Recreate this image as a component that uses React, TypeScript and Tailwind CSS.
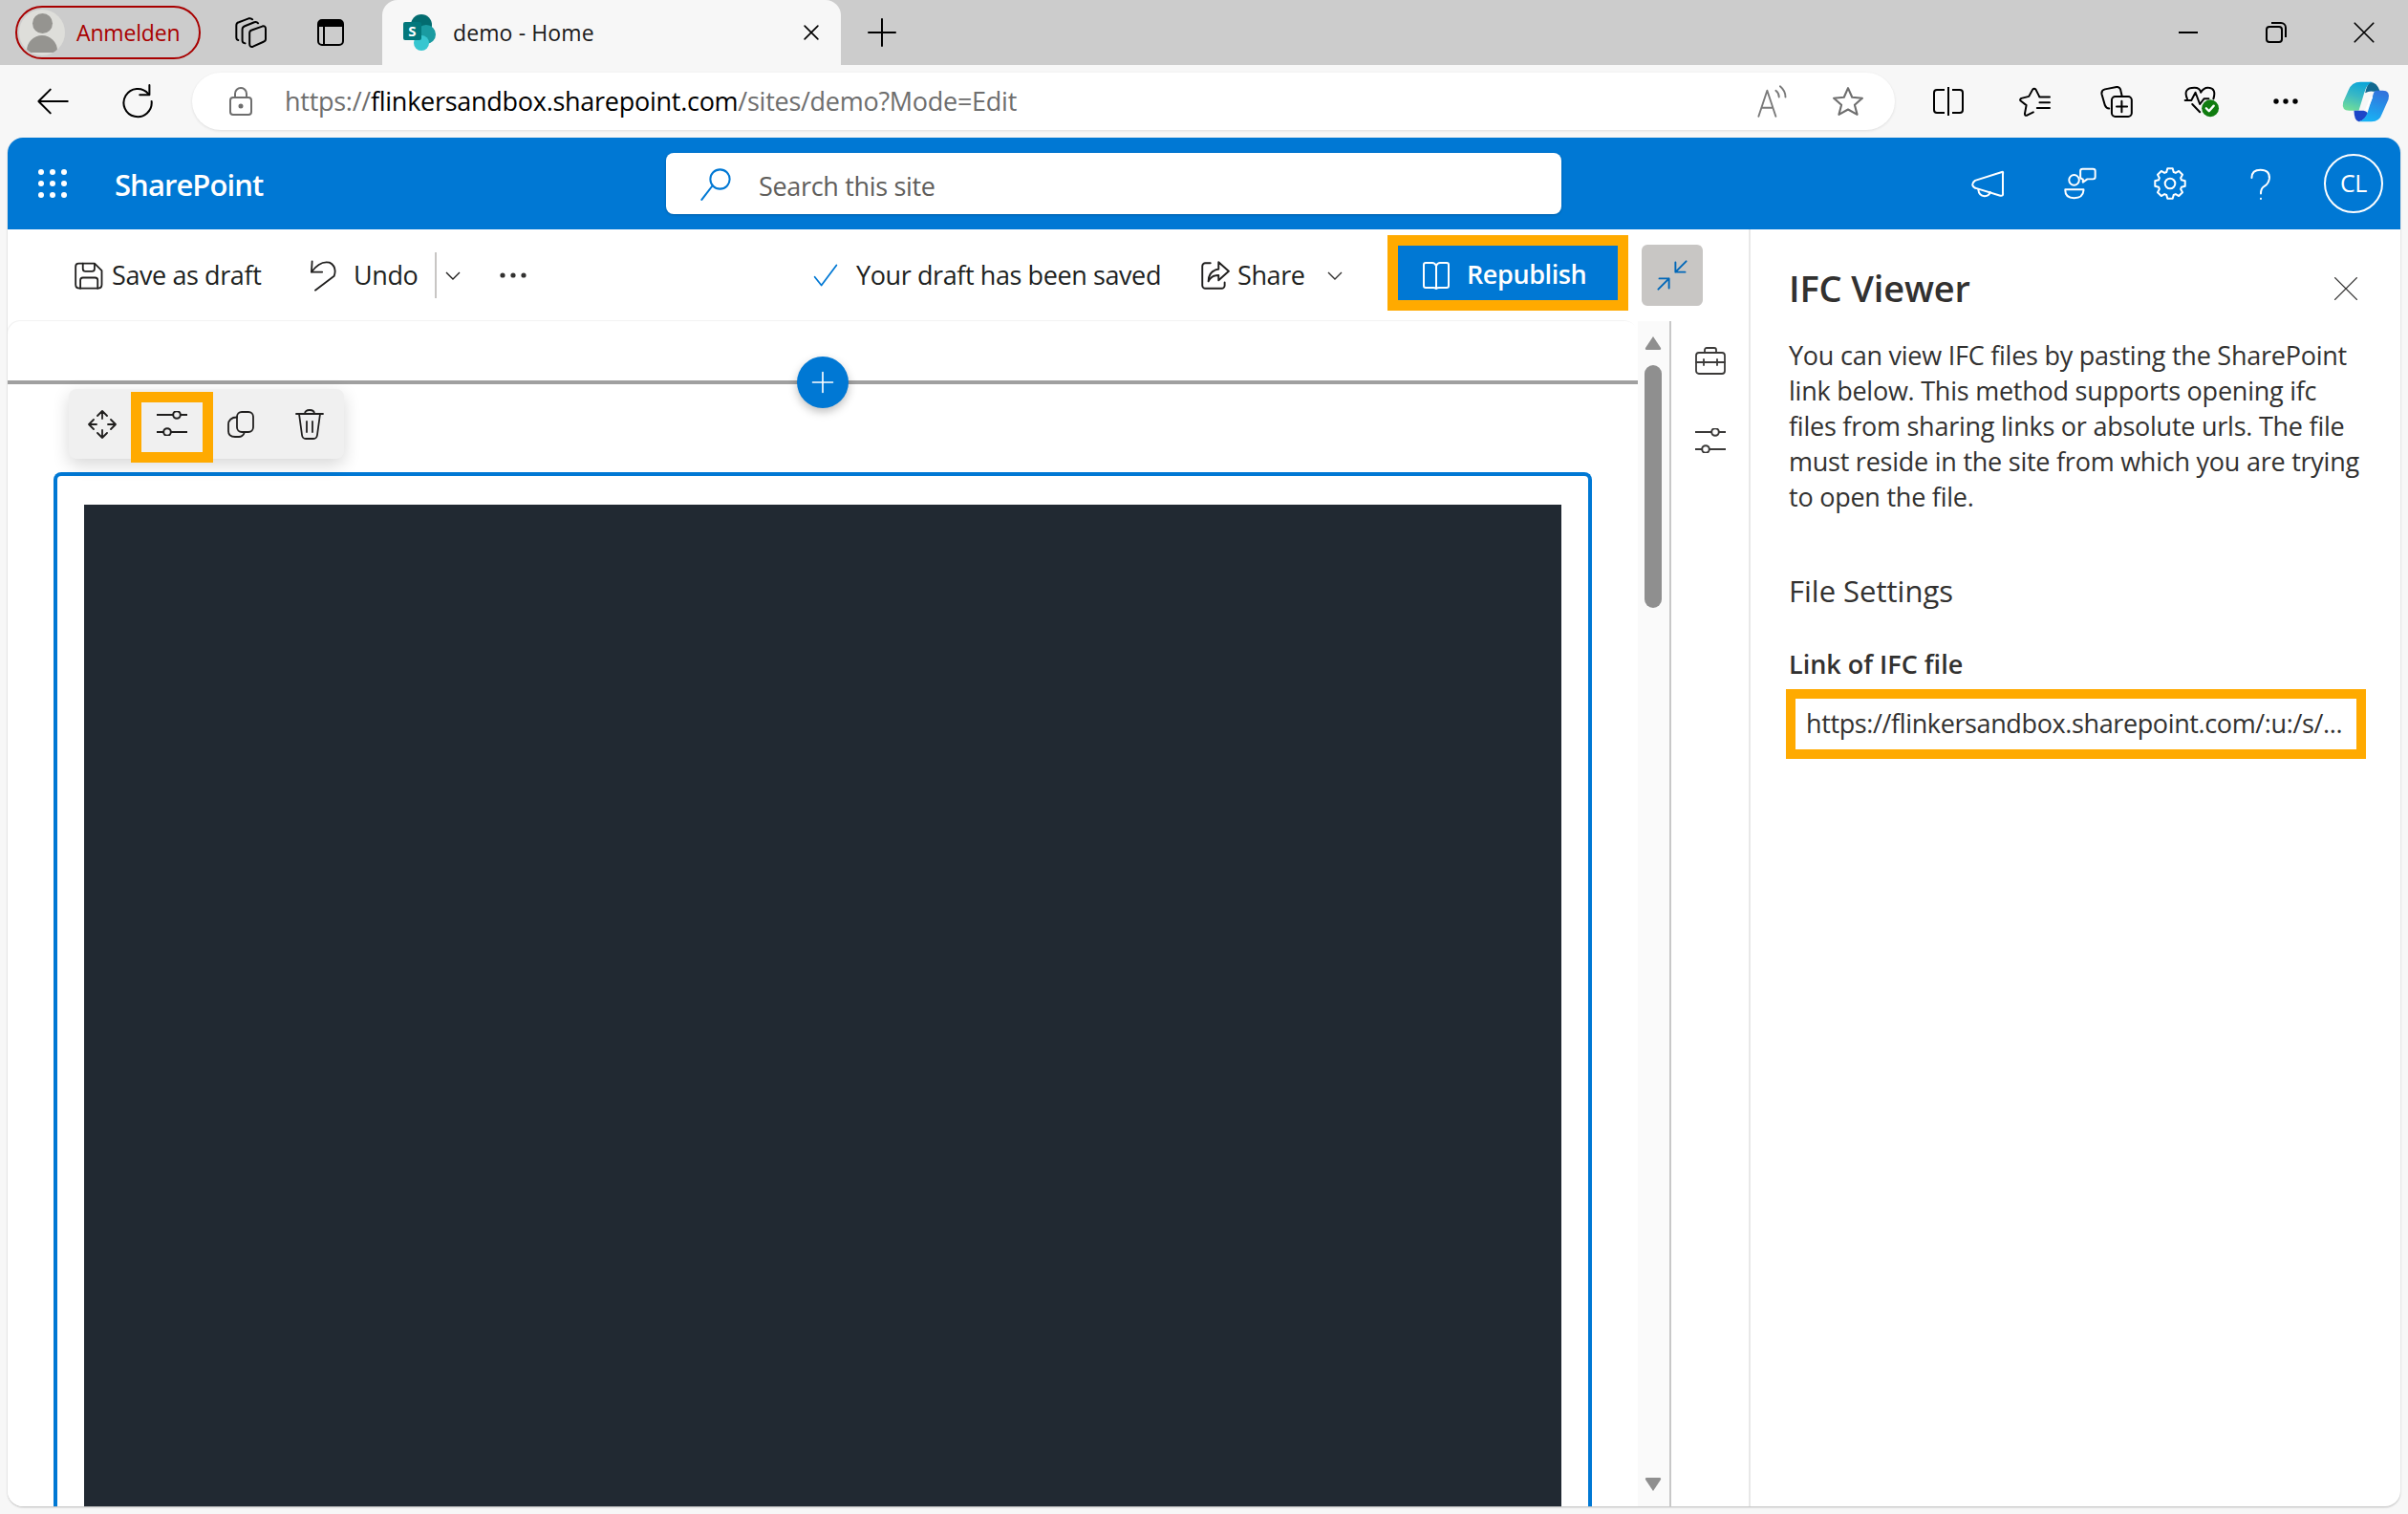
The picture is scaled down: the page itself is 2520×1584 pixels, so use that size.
import React from 'react';

const font = { fontFamily: '"Open Sans", "Noto Sans", sans-serif' };

type IconProps = { size?: number; className?: string; children: React.ReactNode; sw?: number };

function Ico({ size = 32, className = '', children, sw = 2 }: IconProps) {
  return (
    <svg
      width={size}
      height={size}
      viewBox="0 0 32 32"
      fill="none"
      stroke="currentColor"
      strokeWidth={sw}
      strokeLinecap="round"
      strokeLinejoin="round"
      className={className}
    >
      {children}
    </svg>
  );
}

// icon drawn in its own coordinates, traced from the reference
function Raw({ w, h, box, sw, children }: { w: number; h: number; box: string; sw: number; children: React.ReactNode }) {
  return (
    <svg width={w} height={h} viewBox={box} fill="none" stroke="currentColor" strokeWidth={sw} strokeLinecap="round" strokeLinejoin="round">
      {children}
    </svg>
  );
}

const Sliders = () => (
  <svg width="32" height="26" viewBox="0 0 32 26" fill="none" stroke="currentColor" strokeWidth="2">
    <path d="M0 4h17M25 4h7M0 22h7M15 22h17" />
    <circle cx="21" cy="4" r="3.800" />
    <circle cx="11" cy="22" r="3.800" />
  </svg>
);

const Chevron = ({ className = '' }: { className?: string }) => (
  <svg width="16" height="16" viewBox="0 0 16 16" fill="none" stroke="currentColor" strokeWidth="1.4" className={className}>
    <path d="M1 5l7 7 7-7" />
  </svg>
);

const gearPath = () => {
  const pts: string[] = [];
  for (let i = 0; i < 8; i++) {
    const a = (i * 45 * Math.PI) / 180;
    const spots: [number, number][] = [
      [11.8, -0.3],
      [15, -0.17],
      [15, 0.17],
      [11.8, 0.3],
    ];
    spots.forEach(([r, d]) => pts.push(`${(16 + r * Math.cos(a + d)).toFixed(2)} ${(16 + r * Math.sin(a + d)).toFixed(2)}`));
  }
  return `M${pts.join('L')}Z`;
};

function TabStrip() {
  return (
    <div className="flex h-[68px] items-center bg-[#cccccc] pl-4 text-black">
      {/* profile pill */}
      <div className="flex h-[56px] w-[194px] items-center rounded-full border-2 border-[#a80000] pl-[2px]">
        <div className="flex h-[48px] w-[48px] flex-col items-center justify-center overflow-hidden rounded-full bg-[#dededa]">
          <div className="h-[21px] w-[21px] rounded-full bg-[#959490]" />
          <div className="mt-[2px] h-[18px] w-[32px] rounded-t-full bg-[#959490]" />
        </div>
        <span className="ml-[12px] text-[23px] tracking-[-0.007em] text-[#a80000]">Anmelden</span>
      </div>
      <div className="ml-[32px] flex w-[40px] justify-center">
        <Raw w={33} h={33} box="46 53 100 100" sw={6}>
          <path d="M92 103q0-7 7-9l33-12q11-3 11 8v32q0 7-7 9l-33 15q-11 3-11-8z" />
          <path d="M78 136q-9-2-9-9V92q0-8 8-11l30-12q8-2 12 3" />
          <path d="M56 126q-6-1-6-9V79q0-8 8-10l31-12q8-2 12 3" />
        </Raw>
      </div>
      <div className="ml-[44px] flex w-[40px] justify-center">
        <svg width="28" height="28" viewBox="0 0 28 28">
          <rect x="1" y="1" width="26" height="26" rx="4" fill="none" stroke="#000" strokeWidth="2" />
          <path d="M1 5a4 4 0 0 1 4-4h18a4 4 0 0 1 4 4v3H1z" fill="#000" />
          <path d="M7 8v19" stroke="#000" strokeWidth="2" />
        </svg>
      </div>
      {/* active tab */}
      <div className="ml-[34px] flex h-[68px] w-[480px] items-center rounded-t-[16px] bg-[#f7f7f7]">
        <svg width="36" height="40" viewBox="0 0 36 40" className="ml-[21px]">
          <circle cx="20" cy="12" r="11" fill="#036c70" />
          <circle cx="25" cy="22" r="10" fill="#1a9ba1" />
          <circle cx="20" cy="31" r="8" fill="#37c6d0" />
          <rect x="1" y="9" width="19" height="19" rx="2" fill="#03787c" />
          <text x="10.500" y="24" textAnchor="middle" fontSize="15" fontWeight="700" fill="#fff" fontFamily="Open Sans">S</text>
        </svg>
        <span className="ml-[17px] text-[23px] tracking-[0.005em] text-[#1a1a1a]">demo - Home</span>
        <div className="ml-auto mr-[19px] flex w-[24px] justify-center">
          <Ico size={22} sw={2.4}>
            <path d="M6 6l20 20M26 6L6 26" />
          </Ico>
        </div>
      </div>
      <div className="ml-[23px] flex w-[40px] justify-center">
        <Ico size={32} sw={2}>
          <path d="M16 2v28M2 16h28" />
        </Ico>
      </div>
      {/* window controls */}
      <div className="ml-auto flex items-center">
        <div className="flex w-[92px] justify-center">
          <svg width="20" height="2" viewBox="0 0 20 2"><path d="M0 1h20" stroke="#000" strokeWidth="2" /></svg>
        </div>
        <div className="flex w-[92px] justify-center">
          <svg width="22" height="22" viewBox="0 0 22 22" fill="none" stroke="#000" strokeWidth="2">
            <rect x="1" y="5" width="16" height="16" rx="3" />
            <path d="M6 1h10a5 5 0 0 1 5 5v10" />
          </svg>
        </div>
        <div className="flex w-[92px] justify-center">
          <Ico size={24} sw={2.2}>
            <path d="M3 3l26 26M29 3L3 29" />
          </Ico>
        </div>
      </div>
    </div>
  );
}

function AddressRow() {
  return (
    <div className="flex h-[76px] items-center bg-[#f7f7f7] pl-[35px] text-black">
      <div className="flex w-[40px] justify-center">
        <Ico size={36} sw={1.8}>
          <path d="M30 16H3M14 5L3 16l11 11" />
        </Ico>
      </div>
      <div className="ml-[49px] flex w-[40px] justify-center">
        <Ico size={36} sw={1.8}>
          <path d="M26 9A13 13 0 1 0 29 16" />
          <path d="M27 1v9h-9" />
        </Ico>
      </div>
      <div className="ml-[37px] flex h-[60px] w-[1782px] items-center rounded-full bg-white pl-[31px] pr-[29px] shadow-[0_1px_3px_rgba(0,0,0,0.1)]">
        <div className="flex w-[40px] justify-center text-[#6e6e6e]">
          <svg width="26" height="30" viewBox="0 0 26 30" fill="none" stroke="currentColor" strokeWidth="2">
            <rect x="2" y="11" width="22" height="18" rx="3" />
            <path d="M7 11V7a6 6 0 0 1 12 0v4" />
            <circle cx="13" cy="20" r="1.500" fill="currentColor" />
          </svg>
        </div>
        <span className="ml-[26px] text-[27px] tracking-[-0.01em] text-[#6e6e6e]">
          https://<span className="text-black">flinkersandbox.sharepoint.com</span>/sites/demo?Mode=Edit
        </span>
        <div className="ml-auto flex w-[40px] justify-center text-[#7a7a7a]">
          <Ico size={36} sw={1.7}>
            <path d="M3 30L11 6l8 24M6 22h10M19 6c2 1.500 3 3.500 3 6M23 2c3 2.500 5 6 5 10" />
          </Ico>
        </div>
        <div className="ml-[39px] flex w-[40px] justify-center text-[#6e6e6e]">
          <Ico size={34} sw={2}>
            <path d="M16 3l4 9 10 1-7.500 6.500L25 29l-9-5-9 5 2.500-9.500L2 13l10-1z" />
          </Ico>
        </div>
      </div>
      <div className="ml-[36px] flex w-[40px] justify-center">
        <svg width="32" height="30" viewBox="0 0 32 30" fill="none" stroke="#000" strokeWidth="2">
          <path d="M12 3H4a3 3 0 0 0-3 3v18a3 3 0 0 0 3 3h8M20 3h8a3 3 0 0 1 3 3v18a3 3 0 0 1-3 3h-8M16 0v30" />
        </svg>
      </div>
      <div className="ml-[50px] flex w-[40px] justify-center">
        <Raw w={33} h={31} box="36 60 98 94" sw={6}>
          <path d="M99 90L88 68q-5-6-10 0L66 90l-24 6q-6 4-2 8l18 14-5 27q0 7 7 5l20-10" />
          <path d="M100 92h32M100 109h32M92 127h40" />
        </Raw>
      </div>
      <div className="ml-[46px] flex w-[40px] justify-center">
        <Raw w={34} h={33} box="298 60 100 98" sw={6}>
          <path d="M365 92l-5-22q-3-8-12-7l-36 7q-12 3-10 15l10 35q4 10 13 10" />
          <rect x="333" y="93" width="62" height="62" rx="11" />
          <path d="M364 107v34M348 124h33" />
        </Raw>
      </div>
      <div className="ml-[49px] flex w-[40px] justify-center">
        <svg width="38" height="35" viewBox="560 62 115 105">
          <g fill="none" stroke="#000" strokeWidth="6" strokeLinecap="round" strokeLinejoin="round">
            <path d="M572 105q-15-35 23-35 17 0 20 15 10-17 25-15 25 2 15 35" />
            <path d="M565 110h20l13-25 14 37 13-17h15M588 122l24 25" />
          </g>
          <circle cx="645" cy="135" r="27" fill="#107c10" />
          <path d="M632 135l9 9 15-17" fill="none" stroke="#fff" strokeWidth="7" strokeLinecap="round" strokeLinejoin="round" />
        </svg>
      </div>
      <div className="ml-[48px] flex w-[40px] justify-center">
        <svg width="26" height="6" viewBox="0 0 26 6" fill="#000">
          <circle cx="3" cy="3" r="2.700" />
          <circle cx="13" cy="3" r="2.700" />
          <circle cx="23" cy="3" r="2.700" />
        </svg>
      </div>
      <div className="ml-[44px] flex w-[40px] justify-center">
        <svg width="52" height="45" viewBox="1050 40 155 135" className="shrink-0">
          <defs>
            <linearGradient id="cpA" x1="0.600" y1="0" x2="0.300" y2="1">
              <stop offset="0" stopColor="#0aa5d8" />
              <stop offset="0.500" stopColor="#3bb9c4" />
              <stop offset="1" stopColor="#6fdc9a" />
            </linearGradient>
            <linearGradient id="cpB" x1="0.700" y1="0" x2="0.400" y2="1">
              <stop offset="0" stopColor="#3272dc" />
              <stop offset="1" stopColor="#18b2f4" />
            </linearGradient>
          </defs>
          <path d="M1140 45q22 0 32 30h-22q-12-3-25 5 5-25 15-35z" fill="#11688f" />
          <path d="M1110 45h38q-18 5-26 35l-17 55h-30q-25 0-19-27l16-36q10-27 38-27z" fill="url(#cpA)" />
          <path d="M1090 135h30q15 5 13 10-8 20-28 25-15-5-15-35z" fill="#1d46c8" />
          <path d="M1160 72h20q25 0 18 28l-20 45q-8 25-33 25h-40q20-5 28-30l17-55q3-13 10-13z" fill="url(#cpB)" />
          <path d="M1146 92l-18 42" stroke="#fff" strokeWidth="7" fill="none" />
        </svg>
      </div>
    </div>
  );
}

function SuiteBar() {
  return (
    <div className="flex h-[96px] shrink-0 items-center rounded-t-[16px] bg-[#0078d4] text-white">
      <div className="flex w-[689px] items-center pl-[27px]">
        <div className="flex w-[40px] justify-center">
          <svg width="32" height="32" viewBox="0 0 32 32" fill="#fff">
            {[4, 16, 28].map((y) => [4, 16, 28].map((x) => <circle key={`${x}-${y}`} cx={x} cy={y} r="3" />))}
          </svg>
        </div>
        <span className="ml-[45px] pt-[3px] text-[31px] font-semibold tracking-[-0.03em]">SharePoint</span>
      </div>
      <div className="flex h-[64px] w-[937px] items-center rounded-lg bg-white pl-[34px] shadow-[0_1px_3px_rgba(0,0,0,0.2)]">
        <div className="text-[#0078d4]">
          <Ico size={36} sw={1.800}>
            <circle cx="20" cy="12" r="9" />
            <path d="M13 18L3 31" />
          </Ico>
        </div>
        <span className="ml-[27px] pt-[6px] text-[27px] tracking-[-0.012em] text-[#605e5c]">Search this site</span>
      </div>
      <div className="ml-auto flex items-center pr-[18px]">
        <div className="flex w-[36px] justify-center">
          <Raw w={35} h={29} box="68 52 106 88" sw={6}>
            <path d="M165 58L80 85q-10 7-8 15 3 8 13 10l75 23q10 2 8-8V65q2-10-3-7z" />
            <path d="M90 113q2 20 20 22 15-2 18-13" />
          </Raw>
        </div>
        <div className="ml-[60px] flex w-[36px] justify-center">
          <Raw w={35} h={34} box="355 45 106 102" sw={6}>
            <circle cx="390" cy="85" r="16" />
            <path d="M362 115h58v3q-2 24-30 24t-28-24z" />
            <path d="M417 50h33q7 0 7 7v18q0 7-7 7h-18l-14 10v-10q-8 0-8-7V57q0-7 7-7z" />
          </Raw>
        </div>
        <div className="ml-[59px] flex w-[36px] justify-center">
          <Ico size={34} sw={1.900}>
            <path d={gearPath()} />
            <circle cx="16" cy="16" r="5" />
          </Ico>
        </div>
        <div className="ml-[59px] flex w-[36px] justify-center">
          <Raw w={22} h={33} box="948 45 66 100" sw={6}>
            <path d="M952 75q0-25 28-25 30 0 28 28-3 17-16 24-11 6-11 23M981 141v1" />
          </Raw>
        </div>
        <div className="ml-[48px] flex h-[62px] w-[62px] items-center justify-center rounded-full border-2 border-white text-[25px] tracking-[-0.02em]">
          CL
        </div>
      </div>
    </div>
  );
}

function CommandBar() {
  return (
    <div className="flex h-[96px] shrink-0 items-center pl-[67px] text-[27px] tracking-[-0.015em] text-[#201f1e]">
      <div className="flex w-[36px] justify-center">
        <Raw w={30} h={29} box="52 40 90 88" sw={5.500}>
          <path d="M65 45h50l23 23v44q0 12-13 12H68q-13 0-13-12V55q0-10 10-10z" />
          <path d="M78 45v17q0 8 8 8h21q8 0 8-8V47M70 124V98q0-8 8-8h39q8 0 8 8v26" />
        </Raw>
      </div>
      <span className="ml-[6px] w-[203px] whitespace-nowrap">Save as draft</span>
      <div className="flex w-[36px] justify-center">
        <Raw w={29} h={33} box="792 34 88 100" sw={5.500}>
          <path d="M800 38l-2 34h34" />
          <path d="M798 72q27-37 57-30 25 13 15 43l-60 45" />
        </Raw>
      </div>
      <span className="ml-[14px] w-[85px] whitespace-nowrap">Undo</span>
      <div className="h-[48px] w-[2px] bg-[#c8c6c4]" />
      <div className="ml-[9px] w-[16px]">
        <Chevron />
      </div>
      <svg width="28" height="6" viewBox="0 0 28 6" fill="#323130" className="ml-[41px]">
        <circle cx="3" cy="3" r="2.600" />
        <circle cx="14" cy="3" r="2.600" />
        <circle cx="25" cy="3" r="2.600" />
      </svg>
      <div className="ml-[299px] text-[#0078d4]">
        <Ico size={28} sw={2}>
          <path d="M3 18l8 10L29 4" />
        </Ico>
      </div>
      <span className="ml-[18px] w-[358px] whitespace-nowrap">Your draft has been saved</span>
      <Ico size={34} sw={1.800}>
        <path d="M12 4H7a3 3 0 0 0-3 3v19a3 3 0 0 0 3 3h16a3 3 0 0 0 3-3v-3" />
        <path d="M20 3l10 9-10 9v-5c-5 0-8 2-10 6 0-7 3-11 10-12z" />
      </Ico>
      <span className="ml-[7px] w-[94px] whitespace-nowrap">Share</span>
      <Chevron className="text-[#323130]" />
      <div className="mb-[5px] ml-[47px] box-border h-[79px] w-[252px] border-[11px] border-[#ffaa00] bg-[#0078d4]">
        <div className="flex h-full items-center pl-[25px] pt-[4px] font-semibold text-white">
          <svg width="30" height="30" viewBox="0 0 30 30" fill="none" stroke="#fff" strokeWidth="2">
            <path d="M15 5V28M15 5c-1-2-2-3-4-3H4a2 2 0 0 0-2 2v22a2 2 0 0 0 2 2h8c1 0 2 0 3 1 1-1 2-1 3-1h8a2 2 0 0 0 2-2V4a2 2 0 0 0-2-2h-7c-2 0-3 1-4 3z" />
          </svg>
          <span className="ml-[17px] whitespace-nowrap">Republish</span>
        </div>
      </div>
      <div className="ml-[14px] flex h-[64px] w-[64px] items-center justify-center rounded-md bg-[#c8c6c4] text-[#0067b8]">
        <Ico size={36} sw={1.700}>
          <path d="M29 3L19 13M19 4v9h9M3 29l10-10M13 28v-9H4" />
        </Ico>
      </div>
    </div>
  );
}

function WebPartToolbar() {
  return (
    <div className="absolute left-[64px] top-[71px] flex h-[73px] w-[288px] items-center rounded-lg bg-[#f0f0f0] pl-[17px] text-[#201f1e] shadow-[0_6px_18px_rgba(0,0,0,0.16)]">
      <div className="flex w-[36px] justify-center">
        <Raw w={30} h={30} box="0 0 30 30" sw={1.800}>
          <path d="M15 1v8M10 6l5-5 5 5M15 21v8M10 24l5 5 5-5M1 15h8M6 10l-5 5 5 5M21 15h8M24 10l5 5-5 5" />
        </Raw>
      </div>
      <div className="absolute left-[65px] top-[3px] flex h-[74px] w-[86px] items-center justify-center border-[11px] border-[#ffaa00] bg-[#f0f0f0] pb-[8px]">
        <Sliders />
      </div>
      <div className="ml-[110px] flex w-[34px] justify-center">
        <Raw w={28} h={28} box="0 0 28 28" sw={1.800}>
          <rect x="10" y="1" width="17" height="21" rx="5" />
          <path d="M10 6.500C4 6.500 1 10 1 14v7c0 4 3 6 7 6h4c3 0 5-2 6-5" />
        </Raw>
      </div>
      <div className="ml-[37px] flex w-[36px] justify-center">
        <Raw w={30} h={32} box="0 0 30 32" sw={1.800}>
          <path d="M1 5h28M10 5c0-3 2-4 5-4s5 1 5 4M4 5l3 22q.5 4 4 4h8q3.500 0 4-4l3-22M12 13v11M18 13v11" />
        </Raw>
      </div>
    </div>
  );
}

function Scrollbar() {
  return (
    <div className="flex w-[35px] shrink-0 flex-col border-r-2 border-[#c8c8c8] bg-[#fafafa] pl-[6px]">
      <svg width="20" height="14" viewBox="0 0 20 14" fill="#8f8f8f" className="mt-[16px]">
        <path d="M10 0l8 12c.5 1 0 2-1 2H3c-1 0-1.500-1-1-2z" />
      </svg>
      <div className="ml-px mt-[16px] h-[254px] w-[18px] rounded-full bg-[#8f8f8f]" />
      <svg width="20" height="14" viewBox="0 0 20 14" fill="#8f8f8f" className="mb-[16px] mt-auto">
        <path d="M10 14L2 2c-.5-1 0-2 1-2h14c1 0 1.500 1 1 2z" />
      </svg>
    </div>
  );
}

function PropertyPane() {
  return (
    <div className="min-w-0 flex-1 pl-[40px] text-[#323130]">
      <div className="flex items-center justify-between pr-[43px] pt-[34px]">
        <h2 className="text-[38px] font-semibold leading-[54px] tracking-[-0.004em]">IFC Viewer</h2>
        <div className="mt-[2px]">
          <Ico size={28} sw={1.600}>
            <path d="M3 3l26 26M29 3L3 29" />
          </Ico>
        </div>
      </div>
      <p className="mt-[25px] whitespace-nowrap text-[27px] leading-[37px] tracking-[-0.009em]">
        You can view IFC files by pasting the SharePoint
        <br />
        link below. This method supports opening ifc
        <br />
        files from sharing links or absolute urls. The file
        <br />
        must reside in the site from which you are trying
        <br />
        to open the file.
      </p>
      <h3 className="mt-[58px] text-[31px] leading-[44px]">File Settings</h3>
      <div className="mt-[36px] text-[27px] font-semibold leading-[38px]">Link of IFC file</div>
      <div className="ml-[-3px] mt-[7px] box-border flex h-[73px] w-[607px] items-center border-[10px] border-[#ffaa00] pl-[11px] text-[27px] tracking-[-0.014em]">
        <span className="whitespace-nowrap">https://flinkersandbox.sharepoint.com/:u:/s/...</span>
      </div>
    </div>
  );
}

export default function App() {
  return (
    <div className="flex h-[1584px] w-[2520px] flex-col overflow-hidden bg-[#f7f7f7]" style={font}>
      <TabStrip />
      <AddressRow />
      <div className="mx-2 mb-2 flex min-h-0 flex-1 flex-col rounded-[16px] bg-white shadow-[0_1px_2px_rgba(0,0,0,0.25)]">
        <SuiteBar />
        <div className="flex min-h-0 flex-1 overflow-hidden rounded-b-[16px]">
          {/* page column */}
          <div className="flex w-[1824px] shrink-0 flex-col border-r-2 border-[#e8e8e8]">
            <CommandBar />
            <div className="flex min-h-0 flex-1">
              <div className="relative flex w-[1706px] shrink-0 flex-col overflow-hidden rounded-t-[14px] bg-white pt-[62px] shadow-[-1px_-1px_0_#f3f3f3]">
                <div className="h-[4px] bg-[#a0a0a0]" />
                <div className="ml-[48px] mt-[92px] flex w-[1610px] flex-1 flex-col rounded-t-[8px] border-x-4 border-t-4 border-[#0078d4] px-[28px] pt-[30px]">
                  <div className="flex-1 bg-[#212932]" />
                </div>
                <div className="absolute left-[826px] top-[37px] flex h-[54px] w-[54px] items-center justify-center rounded-full bg-[#0078d4] text-white shadow-[0_4px_10px_rgba(0,0,0,0.25)]">
                  <Ico size={24} sw={2.200}>
                    <path d="M16 2v28M2 16h28" />
                  </Ico>
                </div>
                <WebPartToolbar />
              </div>
              <Scrollbar />
              <div className="flex flex-1 flex-col items-center gap-[55px] pt-[25px] text-[#3b3a39]">
                <Ico size={32} sw={1.800}>
                  <rect x="1" y="8" width="30" height="22" rx="3" />
                  <path d="M10 8V5a2 2 0 0 1 2-2h8a2 2 0 0 1 2 2v3M1 18h30M9 15v6M23 15v6" />
                </Ico>
                <Sliders />
              </div>
            </div>
          </div>
          <PropertyPane />
        </div>
      </div>
    </div>
  );
}
